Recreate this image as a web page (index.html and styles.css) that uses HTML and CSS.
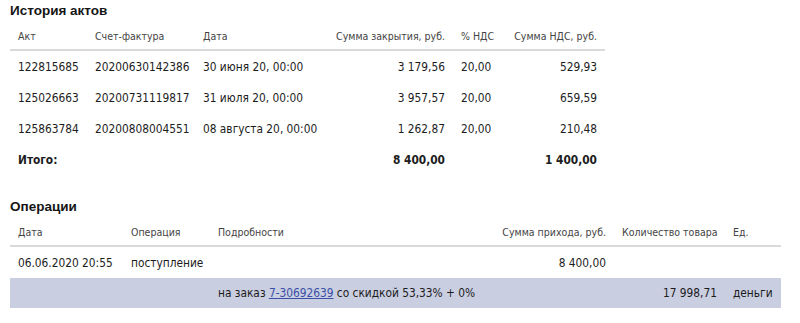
FILE: index.html
```html
<!DOCTYPE html>
<html lang="ru">
<head>
<meta charset="utf-8">
<link rel="stylesheet" href="styles.css">
</head>
<body>
<section class="block">
  <h2 class="title">История актов</h2>
  <table class="grid acts">
    <colgroup>
      <col class="c-akt"><col class="c-inv"><col class="c-date"><col class="c-sum"><col class="c-vatp"><col class="c-vat">
    </colgroup>
    <thead>
      <tr><th>Акт</th><th>Счет-фактура</th><th>Дата</th><th class="num">Сумма закрытия, руб.</th><th>% НДС</th><th class="num">Сумма НДС, руб.</th></tr>
    </thead>
    <tbody>
      <tr><td>122815685</td><td>20200630142386</td><td>30 июня 20, 00:00</td><td class="num">3 179,56</td><td>20,00</td><td class="num">529,93</td></tr>
      <tr><td>125026663</td><td>20200731119817</td><td>31 июля 20, 00:00</td><td class="num">3 957,57</td><td>20,00</td><td class="num">659,59</td></tr>
      <tr><td>125863784</td><td>20200808004551</td><td>08 августа 20, 00:00</td><td class="num">1 262,87</td><td>20,00</td><td class="num">210,48</td></tr>
      <tr class="total"><td>Итого:</td><td></td><td></td><td class="num">8 400,00</td><td></td><td class="num">1 400,00</td></tr>
    </tbody>
  </table>
</section>
<section class="block ops-block">
  <h2 class="title">Операции</h2>
  <table class="grid ops">
    <colgroup>
      <col class="o-date"><col class="o-op"><col class="o-det"><col class="o-sum"><col class="o-qty"><col class="o-unit">
    </colgroup>
    <thead>
      <tr><th>Дата</th><th>Операция</th><th>Подробности</th><th class="num">Сумма прихода, руб.</th><th>Количество товара</th><th>Ед.</th></tr>
    </thead>
    <tbody>
      <tr><td>06.06.2020 20:55</td><td>поступление</td><td></td><td class="num">8 400,00</td><td></td><td></td></tr>
      <tr class="sub"><td></td><td></td><td colspan="2">на заказ <a href="#">7-30692639</a> со скидкой 53,33% + 0%</td><td class="num">17 998,71</td><td>деньги</td></tr>
    </tbody>
  </table>
</section>
</body>
</html>
```

FILE: styles.css
```css
html, body {
  margin: 0;
  padding: 0;
  background: #ffffff;
}
body {
  padding: 0 10px;
  font-family: "DejaVu Sans Condensed", "DejaVu Sans", sans-serif;
  color: #1c1c1c;
}
.title {
  margin: 0;
  height: 22px;
  line-height: 22px;
  font-family: "Liberation Sans", Arial, sans-serif;
  font-size: 13.5px;
  font-weight: bold;
  color: #151515;
}
.ops-block {
  margin-top: 21px;
}
.grid {
  border-collapse: collapse;
  table-layout: fixed;
}
.acts { width: 595px; }
.ops { width: 771px; }
.c-akt { width: 77px; }
.c-inv { width: 108px; }
.c-date { width: 125px; }
.c-sum { width: 133px; }
.c-vatp { width: 51px; }
.c-vat { width: 101px; }
.o-date { width: 113px; }
.o-op { width: 87px; }
.o-det { width: 280px; }
.o-sum { width: 124px; }
.o-qty { width: 111px; }
.o-unit { width: 56px; }
.grid th {
  height: 27px;
  padding: 0 8px;
  text-align: left;
  font-weight: normal;
  font-size: 10.5px;
  color: #444444;
  border-bottom: 2px solid #dadada;
  white-space: nowrap;
  vertical-align: middle;
}
.grid td {
  height: 31px;
  padding: 0 8px;
  font-size: 11.8px;
  white-space: nowrap;
  vertical-align: middle;
}
.grid .num { text-align: right; }
.total td { font-weight: bold; height: 31px; }
.sub td {
  height: 30px;
  background: #c9cee1;
}
.sub a {
  color: #3a4ea6;
  text-decoration: underline;
}
```
